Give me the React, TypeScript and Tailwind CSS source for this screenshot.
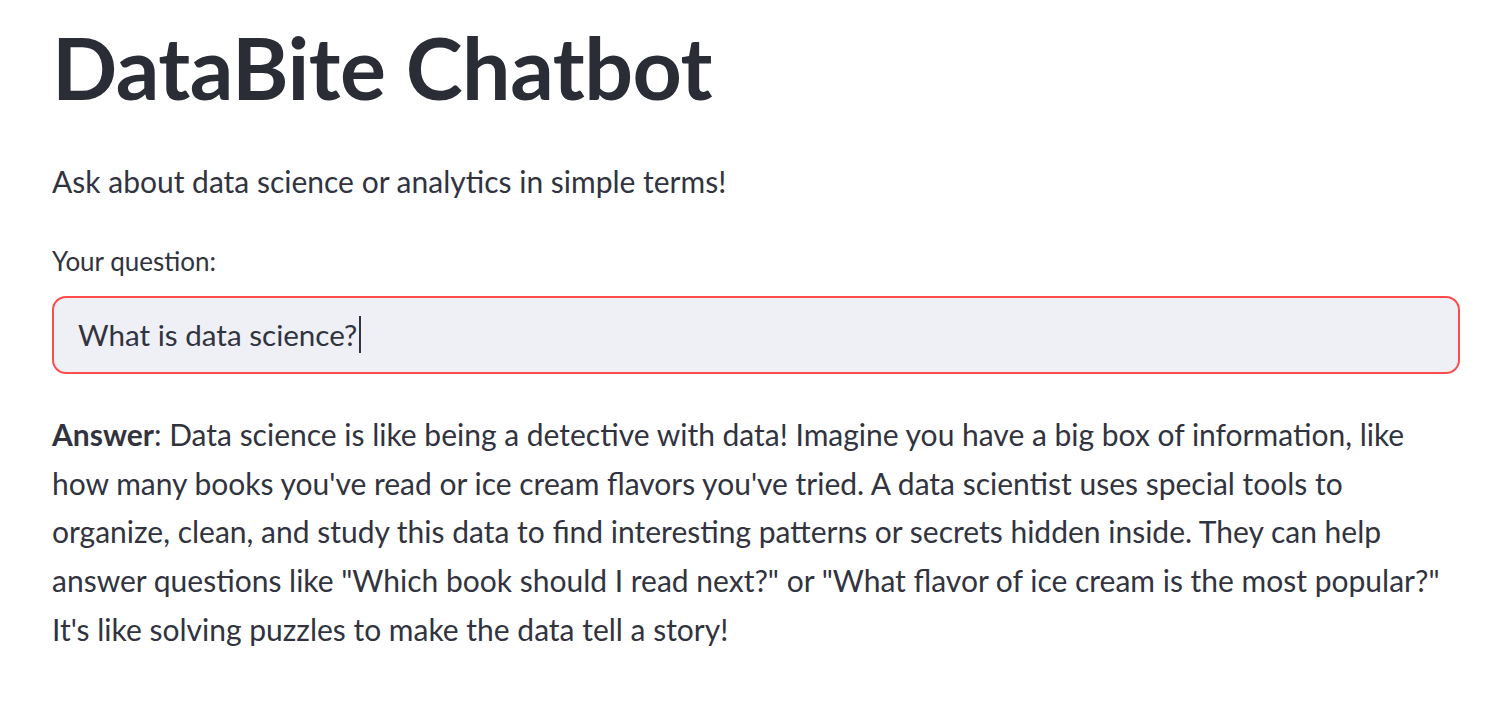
import React from 'react';

const lines = [
    'Data science is like being a detective with data! Imagine you have a big box of information, like',
    "how many books you've read or ice cream flavors you've tried. A data scientist uses special tools to",
    'organize, clean, and study this data to find interesting patterns or secrets hidden inside. They can help',
    'answer questions like "Which book should I read next?" or "What flavor of ice cream is the most popular?"',
    "It's like solving puzzles to make the data tell a story!",
];

export default function App() {
    return (
        <div className="min-h-screen bg-white text-[#31333f] font-['Lato',sans-serif]">
            <main className="w-[1408px] ml-[52px] flex flex-col">
                <h1 className="pt-[15px] text-[86px] leading-[103px] font-bold tracking-[-0.5px] text-[#2b2d36]">
                    DataBite Chatbot
                </h1>

                <p className="mt-[39px] text-[30px] leading-[48.8px]">
                    Ask about data science or analytics in simple terms!
                </p>

                <label className="mt-[35px] text-[26px] leading-[40px]">Your question:</label>

                <div className="mt-[15px] h-[78px] rounded-[14px] border-2 border-[#ff4b4b] bg-[#eef0f5] flex items-center pl-[24px] text-[29.6px]">
                    <span>What is data science?</span>
                    <span className="ml-[2px] w-[2px] h-[37px] bg-[#31333f]" />
                </div>

                <div className="mt-[36px] text-[30px] leading-[48.8px]">
                    {lines.map((l, i) => (
                        <div key={i} className="whitespace-nowrap">
                            {i === 0 && <strong className="font-bold">Answer</strong>}
                            {i === 0 ? ': ' : ''}
                            {l}
                        </div>
                    ))}
                </div>
            </main>
        </div>
    );
}
